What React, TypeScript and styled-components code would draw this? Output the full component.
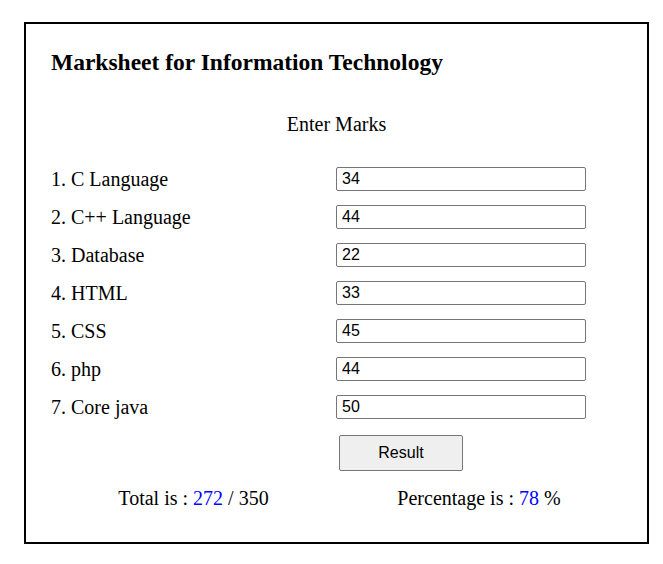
import React from "react";
import styled, { createGlobalStyle } from "styled-components";

const Global = createGlobalStyle`
  html, body { margin: 0; padding: 0; background: #fff; }
  body { font-family: "Liberation Serif", "Times New Roman", serif; color: #000; }
`;

const Page = styled.div`
  padding: 22px 14px 0 24px;
`;

const Sheet = styled.div`
  width: 625px;
  height: 522px;
  box-sizing: border-box;
  border: 2px solid #000;
  padding: 24px 25px 0 25px;
`;

const Title = styled.h2`
  margin: 0;
  height: 28px;
  line-height: 28px;
  font-size: 23.5px;
  font-weight: bold;
`;

const Subtitle = styled.div`
  margin-top: 36px;
  text-align: center;
  font-size: 20px;
  line-height: 24px;
`;

const Grid = styled.div`
  margin-top: 31px;
  display: grid;
  grid-template-columns: 285px 1fr;
  row-gap: 14px;
  align-items: center;
`;

const Label = styled.div`
  font-size: 20px;
  line-height: 22px;
`;

const Input = styled.input`
  box-sizing: border-box;
  width: 250px;
  height: 24px;
  margin: 0;
  padding: 1px 5px;
  border: 1px solid #767676;
  border-radius: 2px;
  font-family: "Liberation Sans", Arial, sans-serif;
  font-size: 16px;
  color: #000;
  background: #fff;
`;

const ButtonCell = styled.div`
  grid-column: 2;
  padding-left: 3px;
  padding-top: 2px;
`;

const Button = styled.button`
  width: 124px;
  height: 36px;
  box-sizing: border-box;
  margin: 0;
  border: 1px solid #767676;
  border-radius: 2px;
  background: #efefef;
  font-family: "Liberation Sans", Arial, sans-serif;
  font-size: 16px;
  color: #000;
`;

const Summary = styled.div`
  margin-top: 16px;
  display: grid;
  grid-template-columns: 285px 1fr;
  font-size: 20px;
  line-height: 22px;
  text-align: center;
`;

const Value = styled.span`
  color: #0000ff;
`;

const subjects: [string, string][] = [
  ["1. C Language", "34"],
  ["2. C++ Language", "44"],
  ["3. Database", "22"],
  ["4. HTML", "33"],
  ["5. CSS", "45"],
  ["6. php", "44"],
  ["7. Core java", "50"],
];

export default function App() {
  return (
    <>
      <Global />
      <Page>
        <Sheet>
          <Title>Marksheet for Information Technology</Title>
          <Subtitle>Enter Marks</Subtitle>
          <Grid>
            {subjects.map(([label, value]) => (
              <React.Fragment key={label}>
                <Label>{label}</Label>
                <Input defaultValue={value} />
              </React.Fragment>
            ))}
            <ButtonCell>
              <Button>Result</Button>
            </ButtonCell>
          </Grid>
          <Summary>
            <div>
              Total is : <Value>272</Value> / 350
            </div>
            <div>
              Percentage is : <Value>78</Value> %
            </div>
          </Summary>
        </Sheet>
      </Page>
    </>
  );
}
